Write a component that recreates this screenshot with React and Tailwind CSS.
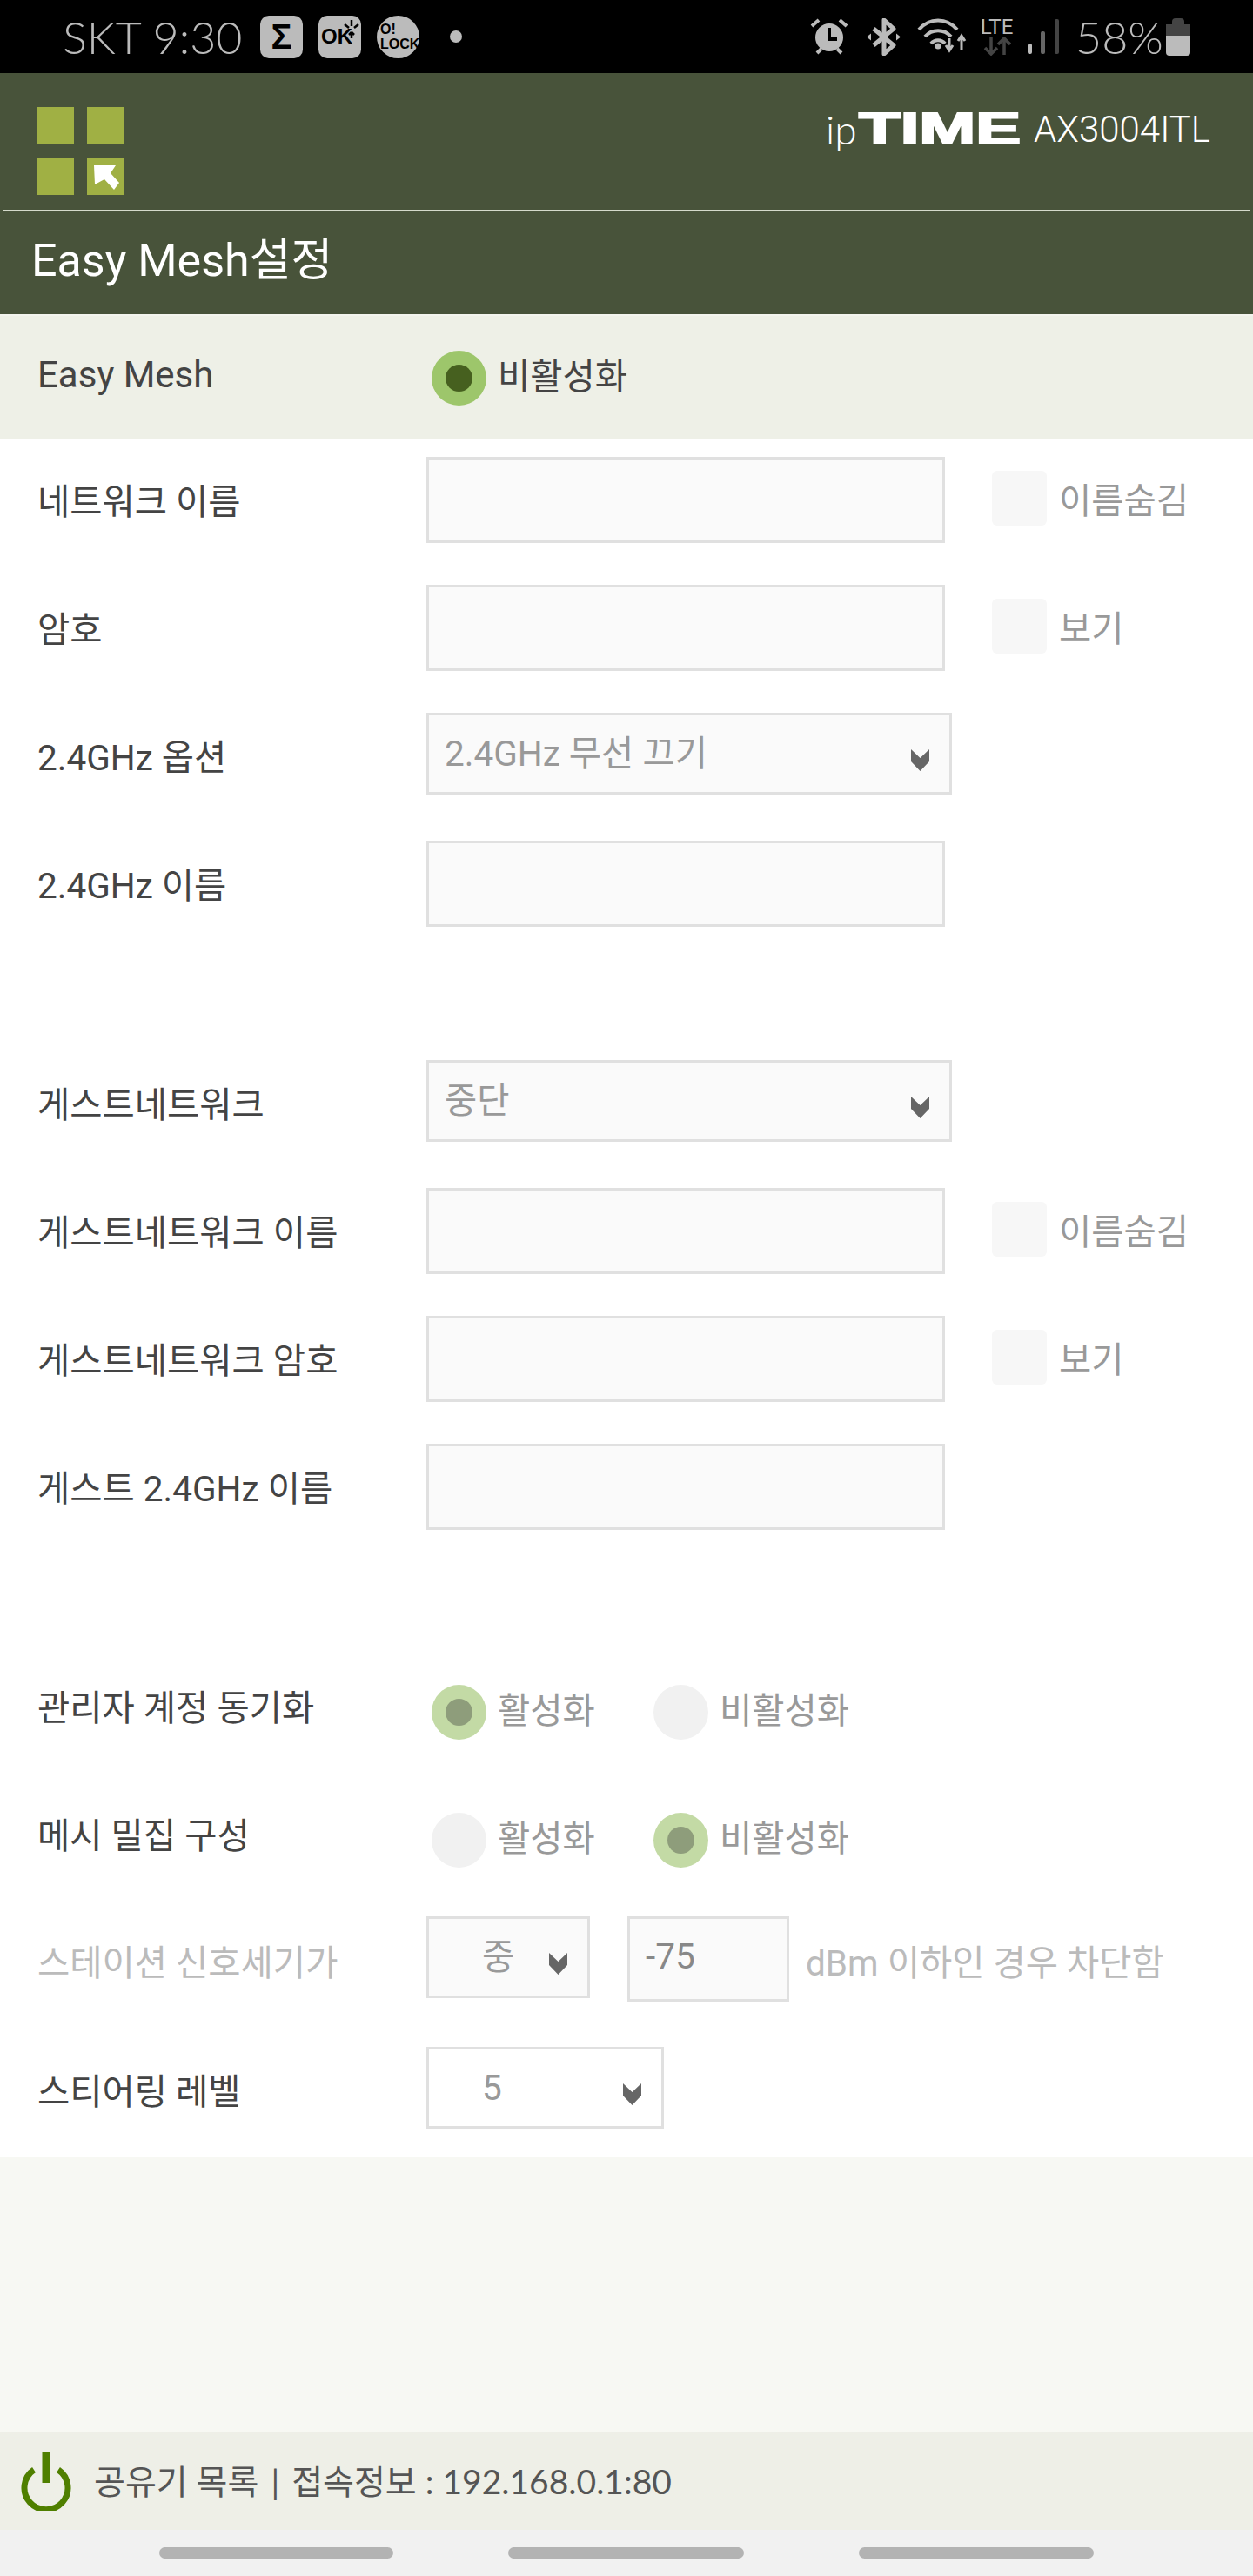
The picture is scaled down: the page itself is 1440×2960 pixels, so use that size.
const LABEL = "text-[#444]";

function Chevron({ className }) {
  return (
    <svg width="21" height="25" viewBox="0 0 21 25" className={className}>
      <polygon points="0,0 10.5,10 21,0 21,14 10.5,25 0,14" fill="#666" />
    </svg>
  );
}

function Input({ w = "w-[596px]", h = "h-[99px]", children }) {
  return (
    <div className={`${w} ${h} shrink-0 border-[3px] border-[#e0e0e0] bg-[#fafafa] flex items-center text-[#888]`}>
      {children}
    </div>
  );
}

function Select({ w = "w-[604px]", pl = "pl-[18px]", bg = "bg-[#fafafa]", text }) {
  return (
    <div className={`${w} h-[94px] shrink-0 border-[3px] border-[#e0e0e0] ${bg} ${pl} pt-[1px] relative flex items-center text-[#999]`}>
      {text}
      <Chevron className="absolute right-[23px] top-[39px]" />
    </div>
  );
}

function Check({ label }) {
  return (
    <div className="flex items-center h-[94px] ml-[54px] gap-[14px]">
      <div className="w-[63px] h-[63px] rounded-md bg-[#f7f7f7]" />
      <span className="text-[#999] pt-[8px]">{label}</span>
    </div>
  );
}

function Row({ label, h = "h-[147px]", children }) {
  return (
    <div className={`${h} pl-[43px] flex items-start`}>
      <div className={`w-[447px] h-[99px] pt-[5px] flex items-center shrink-0 ${LABEL}`}>{label}</div>
      {children}
    </div>
  );
}

function Radio({ on, dim, label }) {
  return (
    <div className="flex items-center gap-[13px] w-[255px]">
      {on ? (
        <div className={`w-[63px] h-[63px] rounded-full flex items-center justify-center ${dim ? "bg-[#c3daa5]" : "bg-[#9dc66b]"}`}>
          <div className={`w-[31px] h-[31px] rounded-full ${dim ? "bg-[#8e9d7b]" : "bg-[#46601f]"}`} />
        </div>
      ) : (
        <div className="w-[63px] h-[63px] rounded-full bg-[#f1f1f1]" />
      )}
      <span className={`pb-[2px] ${dim ? "text-[#999]" : "text-[#444]"}`}>{label}</span>
    </div>
  );
}

function RadioRow({ label, value }) {
  return (
    <div className={`h-[147px] pl-[43px] flex items-center ${LABEL}`}>
      <div className="w-[453px] shrink-0 pb-[8px]">{label}</div>
      <Radio dim on={value === "on"} label="활성화" />
      <Radio dim on={value === "off"} label="비활성화" />
    </div>
  );
}

function StatusBar() {
  return (
    <div className="h-[84px] bg-black flex items-center justify-between pl-[72px] pr-[72px] text-[#bbb]">
      <div className="flex items-center">
        <span className="text-[52px] font-light font-[Lato,sans-serif] w-[227px] whitespace-nowrap">SKT 9:30</span>
        <div className="w-[49px] h-[49px] rounded-[10px] bg-[#bbb] flex items-center justify-center text-black text-[40px] font-bold font-['Liberation_Sans',sans-serif]">Σ</div>
        <div className="w-[49px] h-[49px] ml-[18px] rounded-[10px] bg-[#bbb] relative flex items-center text-black text-[24px] font-bold pl-[3px] font-['Liberation_Sans',sans-serif]">
          OK
          <svg width="18" height="22" viewBox="0 0 18 22" className="absolute right-[2px] top-[5px]" stroke="#000" strokeWidth="2.5">
            <path d="M9 0v7M1 5l5 4M17 5l-5 4M9 21v-6M9 14l-3 3M9 14l3 3" fill="none" />
          </svg>
        </div>
        <div className="w-[49px] h-[49px] ml-[18px] rounded-full bg-[#bbb] flex flex-col justify-center pl-[4px] text-black text-[16px] leading-[17px] font-bold font-['Liberation_Sans',sans-serif]">
          <span>O!</span>
          <span>LOCK</span>
        </div>
        <div className="w-[14px] h-[14px] ml-[35px] rounded-full bg-[#bbb]" />
      </div>
      <div className="flex items-center">
        {/* alarm */}
        <svg width="44" height="42" viewBox="0 0 44 42">
          <circle cx="22" cy="22" r="16" fill="#bbb" />
          <path d="M22 11v13h9" stroke="#000" strokeWidth="4" fill="none" />
          <path d="M2 9l8-7M42 9l-8-7M8 40l5-5M36 40l-5-5" stroke="#bbb" strokeWidth="4" fill="none" />
        </svg>
        {/* bluetooth */}
        <svg width="39" height="43" viewBox="0 0 39 43" className="ml-[21px]" fill="none">
          <path d="M8 12l23 19-11 10V2l11 10L8 31" stroke="#bbb" strokeWidth="5" strokeLinejoin="round" />
          <path d="M0 21.5l5-4v8zM39 21.5l-5-4v8z" fill="#bbb" />
        </svg>
        {/* wifi with up and down arrows */}
        <svg width="57" height="42" viewBox="0 0 57 42" className="ml-[19px]" fill="none" stroke="#bbb" strokeWidth="4">
          <path d="M2 13C14 -1 34 -1 46 13M9 21C17 12 31 12 39 21M16 29C20 24 28 24 32 29" />
          <circle cx="24" cy="32" r="3.5" fill="#bbb" stroke="none" />
          <path d="M37 23v14M33 31l4 6 4-6M51 36V20M47 26l4-6 4 6" strokeWidth="3" />
        </svg>
        {/* LTE */}
        <div className="w-[41px] ml-[14px] flex flex-col items-center">
          <span className="text-[24px] leading-[21px] font-[Roboto,sans-serif]">LTE</span>
          <svg width="32" height="22" viewBox="0 0 32 22" fill="none" stroke="#444" strokeWidth="3.5">
            <path d="M9 1v19M2 13l7 7 7-7M24 21V2M17 9l7-7 7 7" />
          </svg>
        </div>
        {/* signal */}
        <svg width="36" height="40" viewBox="0 0 36 40" className="ml-[15px]">
          <rect x="0" y="28" width="5" height="12" rx="2" fill="#bbb" />
          <rect x="15" y="14" width="5" height="26" rx="2" fill="#666" />
          <rect x="31" y="0" width="5" height="40" rx="2" fill="#444" />
        </svg>
        <span className="text-[52px] font-light font-[Lato,sans-serif] ml-[19px] w-[104px] whitespace-nowrap">58%</span>
        {/* battery */}
        <div className="w-[28px] h-[43px] flex flex-col items-center">
          <div className="w-[14px] h-[7px] bg-[#444] rounded-t-sm" />
          <div className="w-full h-[13px] bg-[#444]" />
          <div className="w-full h-[23px] bg-[#bbb] rounded-b-sm" />
        </div>
      </div>
    </div>
  );
}

function Header() {
  return (
    <div className="h-[279px] bg-[#48533a] border-b-[2px] border-[#f3f4ee] text-white">
      <div className="h-[157px] pl-[42px] pr-[49px] pt-[39px] flex justify-between items-start">
        <div className="grid grid-cols-[43px_43px] grid-rows-[43px_43px] gap-x-[15px] gap-y-[15px]">
          <div className="bg-[#a0b044]" />
          <div className="bg-[#a0b044]" />
          <div className="bg-[#a0b044]" />
          <div className="bg-[#a0b044]">
            <svg width="43" height="43" viewBox="0 0 43 43">
              <polygon points="8,9 33,9 27,18 37,29 31,37 20,25 9,31" fill="#fff" />
            </svg>
          </div>
        </div>
        <div className="flex items-center whitespace-nowrap h-[48px] mt-[1px]">
          <span className="text-[46px] font-light font-[Lato,sans-serif] w-[38px]">ip</span>
          <span className="w-[190px] font-['Liberation_Sans',sans-serif] font-bold text-[50px] leading-none inline-block origin-left scale-x-[1.56] [-webkit-text-stroke:2px_white]">TIME</span>
          <span className="ml-[11px] text-[42px] font-light">AX3004ITL</span>
        </div>
      </div>
      <div className="mx-[3px] h-px bg-[#d5dacb]" />
      <div className="h-[119px] pl-[36px] flex items-center text-[52px] pb-[4px]">Easy Mesh설정</div>
    </div>
  );
}

export default function App() {
  return (
    <div className="h-[2960px] bg-[#f7f8f3] flex flex-col text-[40.5px] leading-normal font-[Roboto,'Noto_Sans_CJK_KR',sans-serif] overflow-hidden">
      <StatusBar />
      <Header />

      {/* Easy Mesh on/off */}
      <div className="h-[141px] bg-[#eef0e7] pl-[43px] pt-[40px] flex items-start">
        <div className="w-[453px] shrink-0 text-[#444] text-[42px] h-[63px] flex items-center pb-[8px]">Easy Mesh</div>
        <Radio on label="비활성화" />
      </div>

      <div className="bg-white pt-[21px]">
        <Row label="네트워크 이름">
          <Input />
          <Check label="이름숨김" />
        </Row>
        <Row label="암호">
          <Input />
          <Check label="보기" />
        </Row>
        <Row label="2.4GHz 옵션">
          <Select text="2.4GHz 무선 끄기" />
        </Row>
        <Row label="2.4GHz 이름">
          <Input />
        </Row>

        <div className="h-[105px]" />

        <Row label="게스트네트워크">
          <Select text="중단" />
        </Row>
        <Row label="게스트네트워크 이름">
          <Input />
          <Check label="이름숨김" />
        </Row>
        <Row label="게스트네트워크 암호">
          <Input />
          <Check label="보기" />
        </Row>
        <Row label="게스트 2.4GHz 이름">
          <Input />
        </Row>

        <div className="h-[88px]" />

        <RadioRow label="관리자 계정 동기화" value="on" />
        <RadioRow label="메시 밀집 구성" value="off" />

        <div className="mt-[14px] h-[150px] pl-[43px] flex items-start">
          <div className="w-[447px] h-[99px] pt-[9px] shrink-0 flex items-center text-[#bbb]">스테이션 신호세기가</div>
          <Select w="w-[188px]" pl="pl-[61px]" text="중" />
          <div className="ml-[43px]">
            <Input w="w-[186px]" h="h-[98px]">
              <span className="pl-[18px] pb-[5px]">-75</span>
            </Input>
          </div>
          <div className="ml-[19px] h-[99px] pt-[9px] flex items-center text-[#bbb] whitespace-nowrap">dBm 이하인 경우 차단함</div>
        </div>

        <Row label="스티어링 레벨" h="h-[126px]">
          <Select w="w-[273px]" pl="pl-[61px]" bg="bg-white" text="5" />
        </Row>
      </div>

      {/* footer */}
      <div className="mt-auto h-[112px] bg-[#eeefe7] flex items-center pl-[24px] text-[#555] font-[Lato,'Noto_Sans_CJK_KR',sans-serif] text-[39px]">
        <svg width="58" height="67" viewBox="0 0 58 67" fill="none" stroke="#4f7f00">
          <path d="M29 0v35" strokeWidth="9" />
          <path d="M15 20a25 25 0 1 0 28 0" strokeWidth="7" />
        </svg>
        <span className="ml-[26px] whitespace-nowrap">공유기 목록<span className="mx-[14px]">|</span>접속정보 : 192.168.0.1:80</span>
      </div>

      {/* nav bar */}
      <div className="h-[53px] bg-[#f1f1f1] flex pt-[20px] pl-[183px] gap-[132px]">
        <div className="w-[269px] h-[13px] rounded-full bg-[#b3b3b3]" />
        <div className="w-[271px] h-[13px] rounded-full bg-[#b3b3b3]" />
        <div className="w-[270px] h-[13px] rounded-full bg-[#b3b3b3]" />
      </div>
    </div>
  );
}
